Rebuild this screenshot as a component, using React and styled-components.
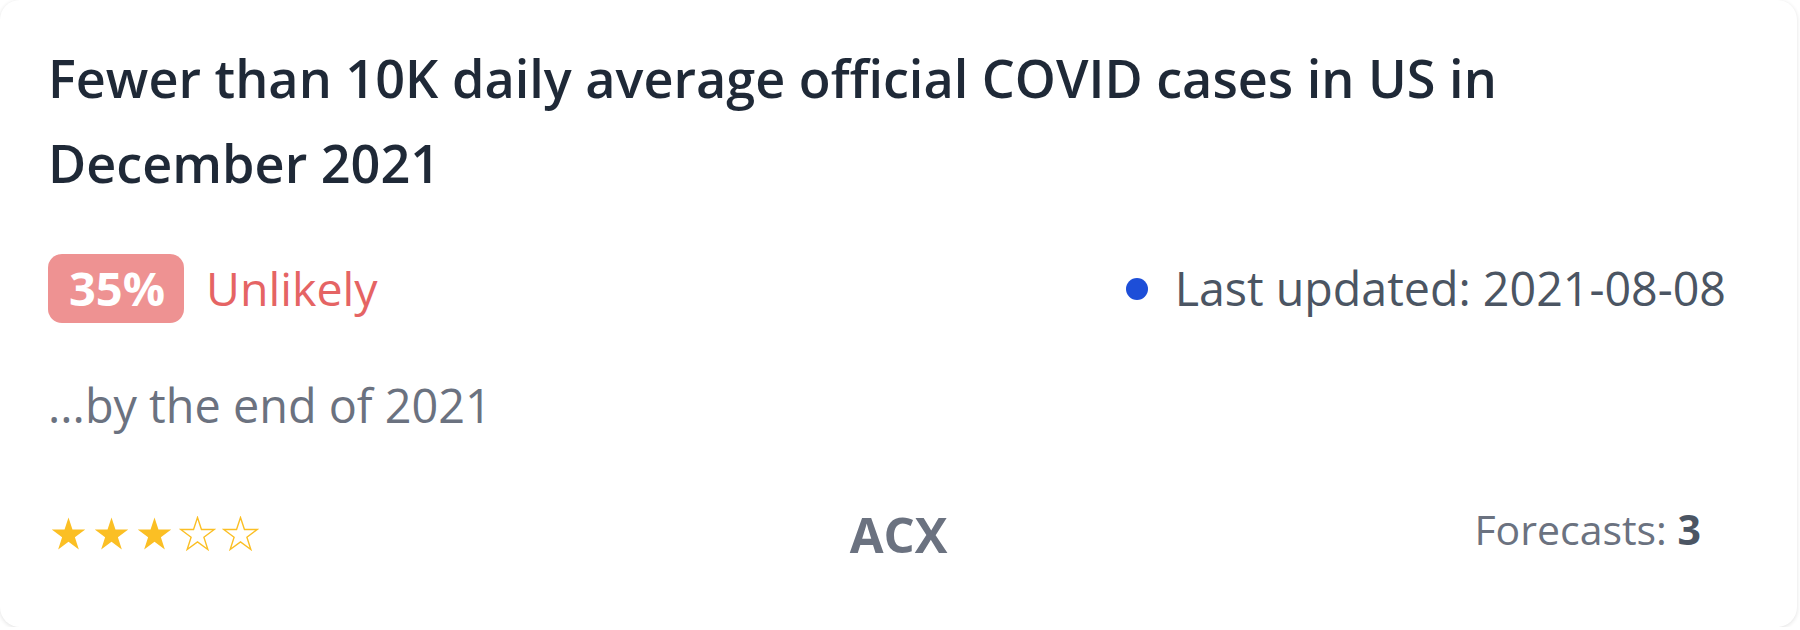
import React from "react";
import styled, { createGlobalStyle } from "styled-components";

const Global = createGlobalStyle`
  html, body { margin: 0; padding: 0; background: #ffffff; }
  body { font-family: "Open Sans", "Noto Sans", sans-serif; }
  * { box-sizing: border-box; }
`;

const Card = styled.div`
  width: 1797px;
  height: 627px;
  background: #ffffff;
  border-radius: 20px;
  box-shadow: 0 1px 4px rgba(0, 0, 0, 0.12);
  padding: 35px 48px 0 48px;
  display: flex;
  flex-direction: column;
`;

const Title = styled.h1`
  margin: 0;
  max-width: 1600px;
  font-size: 52.2px;
  line-height: 85px;
  font-weight: 600;
  color: #1f2937;
`;

const StatusRow = styled.div`
  margin-top: 49px;
  padding-right: 23px;
  display: flex;
  align-items: center;
  justify-content: space-between;
  height: 69px;
`;

const Left = styled.div`
  display: flex;
  align-items: center;
  gap: 22px;
`;

const Badge = styled.span`
  height: 69px;
  padding: 0 19px 0 21px;
  border-radius: 14px;
  background: #ee9292;
  color: #ffffff;
  font-weight: 700;
  font-size: 47px;
  line-height: 69px;
`;

const Label = styled.span`
  color: #e56464;
  font-size: 46.5px;
  line-height: 69px;
`;

const Updated = styled.div`
  display: flex;
  align-items: center;
  gap: 27px;
  color: #4b5563;
  font-size: 46.6px;
  line-height: 69px;
`;

const Dot = styled.span`
  width: 22px;
  height: 22px;
  border-radius: 50%;
  background: #1d4ed8;
`;

const Sub = styled.p`
  margin: 52px 0 0;
  color: #6b7280;
  font-size: 46.8px;
  line-height: 60px;
`;

const Footer = styled.div`
  margin-top: 79px;
  display: grid;
  grid-template-columns: 1fr auto 1fr;
  align-items: start;
  height: 40px;
`;

const Stars = styled.div`
  display: flex;
  gap: 6px;
  margin-top: 2px;
  margin-left: 2px;
`;

const Source = styled.span`
  color: #6b7280;
  font-weight: 700;
  font-size: 49px;
  line-height: 40px;
`;

const Forecasts = styled.span`
  justify-self: end;
  margin-right: 48px;
  color: #6b7280;
  font-size: 41px;
  line-height: 30px;
  & b { font-weight: 700; color: #4b5563; }
`;

const Star = ({ filled }) => (
  <svg width="37" height="35" viewBox="0 0 24 23">
    <path
      d="M12 1 L14.6 8.9 L23 8.9 L16.2 13.9 L18.8 22 L12 17 L5.2 22 L7.8 13.9 L1 8.9 L9.4 8.9 Z"
      fill={filled ? "#fbbf24" : "none"}
      stroke="#fbbf24"
      strokeWidth={filled ? 0 : 0.9}
      strokeLinejoin="miter"
    />
  </svg>
);

export default function App() {
  const rating = 3;
  return (
    <>
      <Global />
      <Card>
        <Title>Fewer than 10K daily average official COVID cases in US in December 2021</Title>
        <StatusRow>
          <Left>
            <Badge>35%</Badge>
            <Label>Unlikely</Label>
          </Left>
          <Updated>
            <Dot />
            <span>Last updated: 2021-08-08</span>
          </Updated>
        </StatusRow>
        <Sub>...by the end of 2021</Sub>
        <Footer>
          <Stars>
            {[0, 1, 2, 3, 4].map((i) => (
              <Star key={i} filled={i < rating} />
            ))}
          </Stars>
          <Source>ACX</Source>
          <Forecasts>
            Forecasts: <b>3</b>
          </Forecasts>
        </Footer>
      </Card>
    </>
  );
}
